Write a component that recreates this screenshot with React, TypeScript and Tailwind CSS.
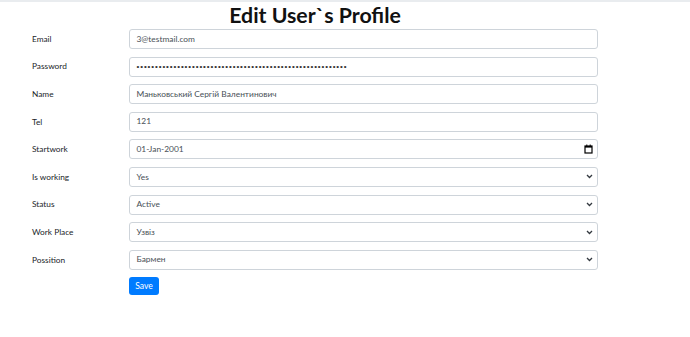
const fields: { label: string; value: string; kind: 'text' | 'password' | 'date' | 'select' }[] = [
  { label: 'Email', value: '3@testmail.com', kind: 'text' },
  { label: 'Password', value: '•'.repeat(57), kind: 'password' },
  { label: 'Name', value: 'Маньковський Сергій Валентинович', kind: 'text' },
  { label: 'Tel', value: '121', kind: 'text' },
  { label: 'Startwork', value: '01-Jan-2001', kind: 'date' },
  { label: 'Is working', value: 'Yes', kind: 'select' },
  { label: 'Status', value: 'Active', kind: 'select' },
  { label: 'Work Place', value: 'Узвіз', kind: 'select' },
  { label: 'Possition', value: 'Бармен', kind: 'select' },
]

function Chevron() {
  return (
    <svg width="7" height="5" viewBox="0 0 7 5" className="text-[#343a40]">
      <path d="M1 1l2.5 2.5L6 1" fill="none" stroke="currentColor" strokeWidth="1.3" />
    </svg>
  )
}

function CalendarIcon() {
  return (
    <svg width="9" height="10" viewBox="0 0 9 10">
      <rect x="1" y="2" width="7" height="7" fill="none" stroke="#000" strokeWidth="1.2" />
      <rect x="1" y="2" width="7" height="1.6" fill="#000" />
      <path d="M2.8 0.5v2M6.2 0.5v2" stroke="#000" strokeWidth="1" />
    </svg>
  )
}

function Field({ value, kind }: { value: string; kind: string }) {
  return (
    <div className="h-[20px] w-full border border-[#ced4da] rounded-[3px] bg-white flex items-center pl-[6.5px] pr-[4px] text-[8.4px] text-[#495057]">
      {kind === 'password' ? (
        <span className="flex-1 font-['Liberation_Sans'] text-[8px] tracking-[0.9px] text-[#333] leading-none">{value}</span>
      ) : (
        <span className="flex-1">{value}</span>
      )}
      {kind === 'date' && <CalendarIcon />}
      {kind === 'select' && <Chevron />}
    </div>
  )
}

export default function App() {
  return (
    <div className="w-[690px] h-[337px] bg-white border-t-2 border-[#e9ecef] font-['Lato',sans-serif] overflow-hidden">
      <div className="ml-[32px] w-[566px]">
        <h1 className="text-center text-[21.3px] font-bold leading-[26px] text-[#111]">Edit User`s Profile</h1>
        <div className="mt-[1px] grid grid-cols-[97px_1fr] gap-y-[7.6px] items-center">
          {fields.map((f) => (
            <div key={f.label} className="contents">
              <label className="text-[8.3px] text-[#212529]">{f.label}</label>
              <Field value={f.value} kind={f.kind} />
            </div>
          ))}
          <div />
          <div className="flex">
            <button className="h-[18px] w-[30px] rounded-[3px] bg-[#007bff] text-white text-[8.6px] leading-none">Save</button>
          </div>
        </div>
      </div>
    </div>
  )
}
